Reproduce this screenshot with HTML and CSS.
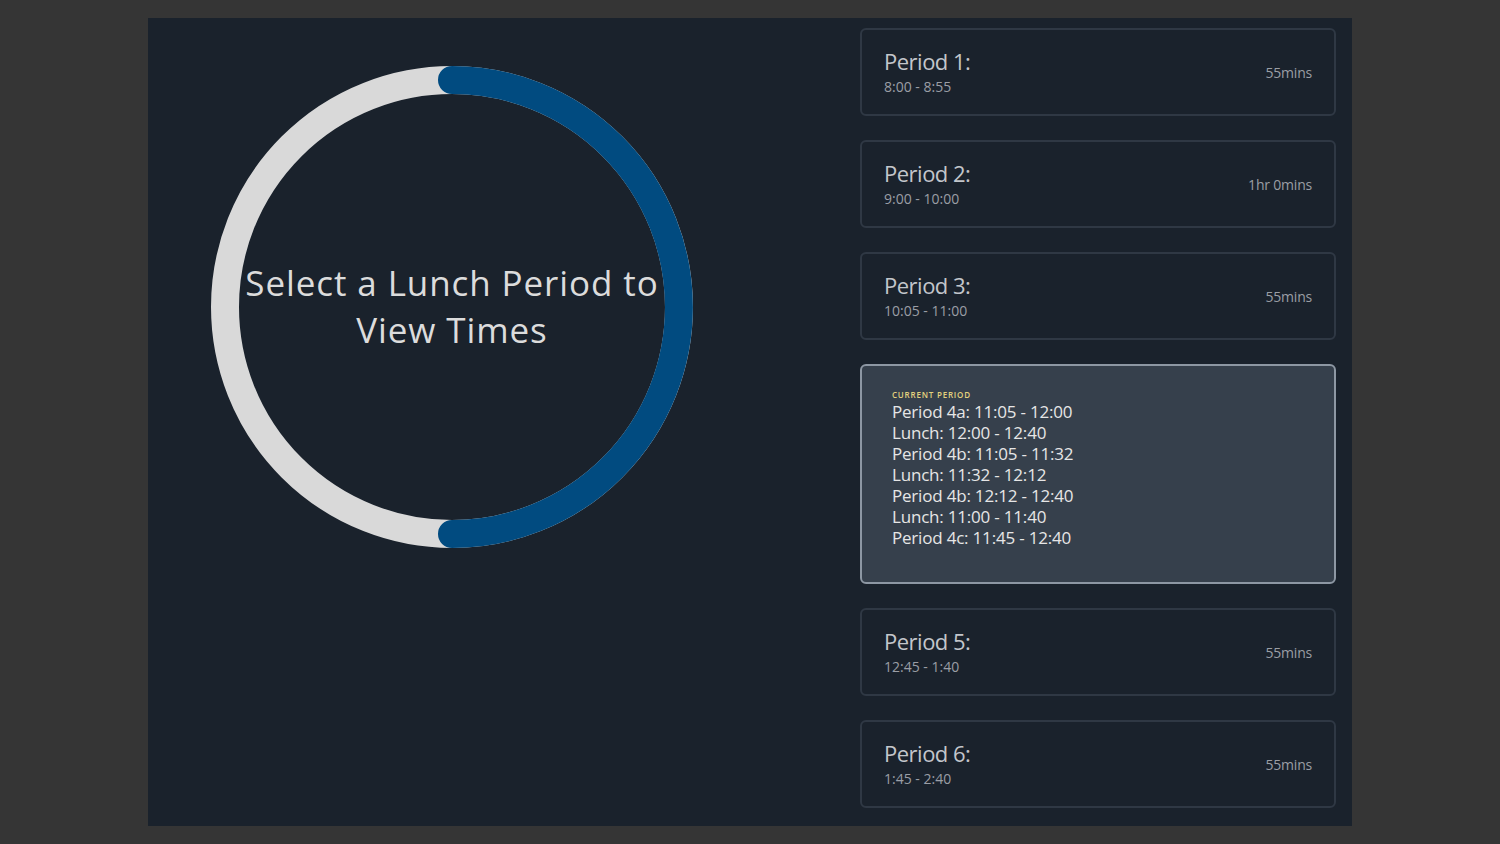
FILE: index.html
```html
<!DOCTYPE html>
<html>
<head>
<meta charset="utf-8">
<link rel="stylesheet" href="styles.css">
</head>
<body>
<main class="panel">
  <section class="dial-col">
    <div class="dial">
      <svg class="ring" width="482" height="482" viewBox="0 0 482 482">
        <circle cx="241" cy="241" r="227" fill="none" stroke="#d9d9d9" stroke-width="28"/>
        <path d="M241 14 A227 227 0 0 1 241 468" fill="none" stroke="#014b80" stroke-width="28" stroke-linecap="round"/>
      </svg>
      <div class="dial-text">Select a Lunch Period to<br>View Times</div>
    </div>
  </section>
  <section class="periods">
    <div class="card">
      <div class="card-main"><div class="title">Period 1:</div><div class="time">8:00 - 8:55</div></div>
      <div class="dur">55mins</div>
    </div>
    <div class="card">
      <div class="card-main"><div class="title">Period 2:</div><div class="time">9:00 - 10:00</div></div>
      <div class="dur">1hr 0mins</div>
    </div>
    <div class="card">
      <div class="card-main"><div class="title">Period 3:</div><div class="time">10:05 - 11:00</div></div>
      <div class="dur">55mins</div>
    </div>
    <div class="card current">
      <div class="label">CURRENT PERIOD</div>
      <div class="line">Period 4a: 11:05 - 12:00</div>
      <div class="line">Lunch: 12:00 - 12:40</div>
      <div class="line">Period 4b: 11:05 - 11:32</div>
      <div class="line">Lunch: 11:32 - 12:12</div>
      <div class="line">Period 4b: 12:12 - 12:40</div>
      <div class="line">Lunch: 11:00 - 11:40</div>
      <div class="line">Period 4c: 11:45 - 12:40</div>
    </div>
    <div class="card">
      <div class="card-main"><div class="title">Period 5:</div><div class="time">12:45 - 1:40</div></div>
      <div class="dur">55mins</div>
    </div>
    <div class="card">
      <div class="card-main"><div class="title">Period 6:</div><div class="time">1:45 - 2:40</div></div>
      <div class="dur">55mins</div>
    </div>
  </section>
</main>
</body>
</html>
```
FILE: styles.css
```css
html, body {
  margin: 0;
  padding: 0;
  background: #353535;
  height: 100%;
}
body {
  font-family: "Open Sans", "Noto Sans", sans-serif;
  padding: 18px 148px;
  box-sizing: border-box;
}
.panel {
  background: #1a222c;
  height: 808px;
  display: flex;
  box-sizing: border-box;
}
.dial-col {
  width: 608px;
  flex: none;
  display: flex;
  justify-content: center;
  padding-top: 48px;
  box-sizing: border-box;
}
.dial {
  position: relative;
  width: 482px;
  height: 482px;
}
.ring { display: block; }
.dial-text {
  position: absolute;
  left: -20px;
  right: -20px;
  top: 193px;
  text-align: center;
  color: #dcdcdc;
  font-size: 35px;
  line-height: 47px;
  letter-spacing: 0.9px;
}
.periods {
  margin-left: 104px;
  width: 476px;
  padding-top: 10px;
  display: flex;
  flex-direction: column;
  gap: 24px;
}
.card {
  height: 88px;
  box-sizing: border-box;
  border: 2px solid #2f3844;
  border-radius: 6px;
  display: flex;
  align-items: center;
  justify-content: space-between;
  padding: 0 22px 0 22px;
}
.card-main {
  margin-top: -1px;
}
.title {
  color: #c3c6cb;
  font-size: 22px;
  line-height: 26px;
  letter-spacing: -0.5px;
}
.time {
  color: #9a9ea5;
  font-size: 14px;
  line-height: 18px;
  margin-top: 4px;
  letter-spacing: 0;
}
.dur {
  color: #9a9ea5;
  font-size: 14px;
  letter-spacing: -0.2px;
}
.card.current {
  height: 220px;
  background: #36404c;
  border-color: #8d97a3;
  display: block;
  padding: 23px 30px;
}
.label {
  color: #e4d27e;
  font-size: 8px;
  font-weight: 600;
  letter-spacing: 0.8px;
  line-height: 12px;
}
.line {
  color: #e6e6e6;
  font-size: 17px;
  font-weight: 500;
  line-height: 21px;
  letter-spacing: -0.2px;
}
```
